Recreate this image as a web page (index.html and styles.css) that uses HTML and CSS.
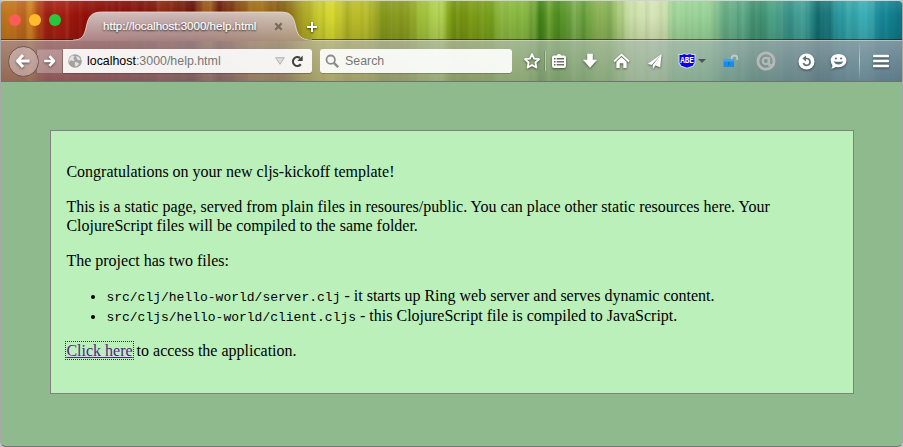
FILE: index.html
```html
<!DOCTYPE html>
<html lang="en">
<head>
<meta charset="utf-8">
<title>http://localhost:3000/help.html</title>
<link rel="stylesheet" href="styles.css">
</head>
<body>
<div class="window">
  <header class="chrome">
    <div class="tabstrip">
      <div class="lights"><i class="light close"></i><i class="light min"></i><i class="light max"></i></div>
      <div class="tab">
        <svg class="tab-shape" width="239" height="30" viewBox="0 0 239 30">
          <defs><linearGradient id="tg" x1="0" x2="1" y1="0" y2="0"><stop offset="0" stop-color="#ab7f80"/><stop offset=".45" stop-color="#a07a7a"/><stop offset=".75" stop-color="#a48676"/><stop offset="1" stop-color="#a8936f"/></linearGradient>
          <linearGradient id="th" x1="0" x2="0" y1="0" y2="1"><stop offset="0" stop-color="#fff" stop-opacity=".5"/><stop offset="1" stop-color="#fff" stop-opacity=".04"/></linearGradient></defs>
          <path d="M0 29C9 29 11 25 13 17C15 7 17 1 29 1H208C219 1 221 7 223 17C225 25 228 29 239 29V30H0Z" fill="url(#tg)"/>
          <path d="M0 29C9 29 11 25 13 17C15 7 17 1 29 1H208C219 1 221 7 223 17C225 25 228 29 239 29V30H0Z" fill="url(#th)"/>
          <path d="M0 29C9 29 11 25 13 17C15 7 17 1 29 1H208C219 1 221 7 223 17C225 25 228 29 239 29" fill="none" stroke="#f0e2da" stroke-opacity=".75"/>
        </svg>
        <span class="tab-title">http://localhost:3000/help.html</span>
        <svg class="tab-close" width="9" height="9" viewBox="0 0 9 9"><path d="M1.3 1.3L7.7 7.7M7.7 1.3L1.3 7.7" stroke="#776a5e" stroke-width="2.2"/></svg>
      </div>
      <svg class="newtab" width="12" height="12" viewBox="0 0 12 12"><path d="M6 1V11M1 6H11" stroke="#fff" stroke-width="2"/></svg>
    </div>
    <nav class="toolbar">
      <div class="back"><svg width="16" height="16" viewBox="0 0 16 16"><path d="M8 2L2.5 8L8 14M3 8H14.5" fill="none" stroke="#fff" stroke-width="3.2" stroke-linejoin="round"/></svg></div>
      <div class="forward"><svg width="13" height="14" viewBox="0 0 16 16"><path d="M8 2L13.5 8L8 14M13 8H1.5" fill="none" stroke="#fff" stroke-width="3.2" stroke-linejoin="round"/></svg></div>
      <div class="url">
        <svg width="14" height="14" viewBox="0 0 14 14"><circle cx="7" cy="7" r="6.8" fill="#a2a2a2"/><path d="M1.5 4L4 1.4L6.7 2L5.3 4.4L6.8 6.2L4.8 7L3 6.2L1 8ZM8 2L11 3L12.8 6L10.6 6.2L9 5ZM6.8 8L9.8 8.4L11 10L8 12.8L6.8 11Z" fill="#e2e2e2"/></svg>
        <span class="address"><b>localhost</b>:3000/help.html</span>
        <svg class="drop" width="10" height="8" viewBox="0 0 10 8"><path d="M.7 .7H9.3L5 7.3Z" fill="#ddd" stroke="#b3b1b1"/></svg>
        <svg class="reload" width="13" height="13" viewBox="0 0 13 13"><path d="M9.8 9.3A4.4 4.4 0 1 1 9 3" fill="none" stroke="#444" stroke-width="2.2"/><path d="M11.7 .6V6H6.3Z" fill="#444"/></svg>
      </div>
      <div class="search">
        <svg width="15" height="15" viewBox="0 0 15 15"><circle cx="5.7" cy="5.7" r="4.2" fill="none" stroke="#8b8b8b" stroke-width="1.8"/><path d="M8.8 8.8L13.2 13.2" stroke="#8b8b8b" stroke-width="2.4"/></svg>
        <span>Search</span>
      </div>
      <div class="icons">
        <svg class="star" width="18" height="18" viewBox="0 0 18 18"><path d="M9 2L11.1 6.6L16.1 7.1L12.4 10.5L13.4 15.5L9 13L4.6 15.5L5.6 10.5L1.9 7.1L6.9 6.6Z" fill="none" stroke="#fff" stroke-width="1.8" stroke-linejoin="round"/></svg>
        <i class="sep short"></i>
        <svg class="list" width="16" height="16" viewBox="0 0 16 16"><path fill-rule="evenodd" d="M3 2.5H5.5L7 1H9L10.5 2.5H13Q15 2.5 15 4.5V13Q15 15 13 15H3Q1 15 1 13V4.5Q1 2.5 3 2.5ZM3 5V6.5H4.5V5ZM5.7 5V6.5H13V5ZM3 8V9.5H4.5V8ZM5.7 8V9.5H13V8ZM3 11V12.5H4.5V11ZM5.7 11V12.5H13V11Z" fill="#fff"/></svg>
        <svg class="down" width="16" height="16" viewBox="0 0 16 16"><path d="M5.5 1H10.5V7H14.5L8 14.5L1.5 7H5.5Z" fill="#fff" stroke="#fff" stroke-width=".6" stroke-linejoin="round"/></svg>
        <svg class="home" width="17" height="16" viewBox="0 0 17 16"><path d="M1 8.5L8.5 1.7L16 8.5" fill="none" stroke="#fff" stroke-width="1.7"/><path d="M3.4 8.8L8.5 4.2L13.6 8.8V15H10.3V10.2H6.7V15H3.4Z" fill="#fff"/></svg>
        <svg class="plane" width="16" height="17" viewBox="0 0 16 17"><path d="M14.5 1L.8 10.8L4.7 12Z M14.5 1L5.8 12.1V16L8 13.3Z M14.5 1L8.6 12.4L13.2 14.3Z" fill="#fff"/></svg>
        <svg class="abe" width="18" height="16" viewBox="0 0 18 16"><path d="M1 1.5H4L5 .7H7L9 1.5L11 .7H13L14 1.5H17V10L14.8 13.3L9 15.2L3.2 13.3L1 10Z" fill="#0505e8" stroke="#d2d7df" stroke-width="1.1"/><text x="9" y="10.2" text-anchor="middle" textLength="13.6" lengthAdjust="spacingAndGlyphs">ABE</text></svg>
        <i class="caret"></i>
        <svg class="lock" width="16" height="14" viewBox="0 0 16 14"><path d="M8.6 6V4Q8.6 1.5 11.5 1.5Q14.2 1.5 14.2 4V6" fill="none" stroke="#bdcbc9" stroke-width="1.8"/><rect x=".7" y="5.5" width="10.3" height="7.5" fill="#168cf2"/><rect x=".7" y="5.5" width="10.3" height="2" fill="#38a5ff"/><path d="M5.8 8V11" stroke="#266c96" stroke-width="1.6"/></svg>
        <svg class="at" width="20" height="20" viewBox="0 0 20 20"><circle cx="10" cy="10" r="8.1" fill="none" stroke="#b9b8b9" stroke-width="2.8"/><circle cx="9.8" cy="10" r="3.1" fill="none" stroke="#b9b8b9" stroke-width="2.1"/><path d="M13.2 6V14.2H16" fill="none" stroke="#b9b8b9" stroke-width="2"/></svg>
        <svg class="undo" width="17" height="17" viewBox="0 0 17 17"><circle cx="8.5" cy="8.5" r="8" fill="#fff"/><path d="M7.5 5.5H8.7A3.4 3.4 0 1 1 5.4 10" fill="none" stroke="#5b7479" stroke-width="1.7"/><path d="M4.4 5.5L8 2.6V8.4Z" fill="#5b7479"/></svg>
        <svg class="smile" width="17" height="17" viewBox="0 0 17 17"><path d="M8.5 1C13 1 16.4 3.8 16.4 7.6S13 14.3 8.5 14.3Q7 14.3 5.7 14Q4.5 15.4 1.2 15.7Q2.6 14 2.4 12.2Q.7 10.4 .7 7.6C.7 3.8 4 1 8.5 1Z" fill="#fff"/><circle cx="5.9" cy="5.5" r="1.1" fill="#5b7479"/><circle cx="11.1" cy="5.5" r="1.1" fill="#5b7479"/><path d="M3.9 8.3Q8.5 9.4 13.1 8.3Q12.2 11.6 8.5 11.6T3.9 8.3Z" fill="#5b7479"/></svg>
        <i class="sep tall"></i>
        <svg class="menu" width="16" height="14" viewBox="0 0 16 14"><path d="M1.3 2H14.7M1.3 7H14.7M1.3 12H14.7" stroke="#fff" stroke-width="2.7" stroke-linecap="round"/></svg>
      </div>
    </nav>
  </header>
  <main class="page">
    <article class="box">
      <p>Congratulations on your new cljs-kickoff template!</p>
      <p>This is a static page, served from plain files in resoures/public. You can place other static resources here. Your ClojureScript files will be compiled to the same folder.</p>
      <p>The project has two files:</p>
      <ul>
        <li><code>src/clj/hello-world/server.clj</code> - it starts up Ring web server and serves dynamic content.</li>
        <li><code>src/cljs/hello-world/client.cljs</code> - this ClojureScript file is compiled to JavaScript.</li>
      </ul>
      <p><a href="#">Click here</a> to access the application.</p>
    </article>
  </main>
</div>
</body>
</html>
```
FILE: styles.css
```css
* { box-sizing: border-box; }
html, body { height: 100%; }
body { margin: 0; background: #c4c4c4; overflow: hidden; }
.window { height: 447px; border: 1px solid #a7a7a7; border-top-color: #d2d2d2; border-bottom-color: #777; border-radius: 5px 5px 6px 6px; overflow: hidden; display: flex; flex-direction: column; background: #8fba8e; }
.chrome {
  flex: none; height: 81px;
  background:
    linear-gradient(rgba(255,255,240,.1), rgba(255,255,240,0) 14px, rgba(0,0,0,.1) 39px),
    repeating-linear-gradient(90deg, rgba(255,255,220,.035) 0 2px, transparent 4px 7px, rgba(0,0,0,.035) 9px 10px, transparent 13px),
    repeating-linear-gradient(90deg, rgba(0,0,0,.04) 0 1px, transparent 3px 17px, rgba(255,255,200,.04) 19px, transparent 23px),
    linear-gradient(90deg, #b87018 0, #c8781c 10px, #b8601c 20px, #d08420 30px, #b44816 37px, #a02010 44px, #a81c10 62px, #900f08 85px, #840c06 130px, #7c1408 150px, #8e240c 162px, #7a1e08 175px, #641006 192px, #9a5418 203px, #a05c1c 209px, #681806 218px, #7a2c0c 228px, #8c4e10 240px, #a8751a 256px, #885810 275px, #8a6c14 288px, #a49820 298px, #b0ac24 306px, #c8ca2c 318px, #d8da30 332px, #b4b626 344px, #bcbe28 360px, #a8b028 374px, #829618 380px, #8a9c20 396px, #86981c 406px, #9cb830 416px, #a6c844 428px, #b8d858 440px, #86a81c 447px, #71900e 454px, #7c9a14 470px, #76a01c 490px, #8cb840 500px, #88b840 520px, #74a83a 533px, #3c7e14 539px, #69a030 548px, #4c8c1c 558px, #7cac50 575px, #649c38 583px, #8cb454 596px, #86ae58 610px, #aacc7c 618px, #cce0a8 630px, #d6e4b6 652px, #c9deaa 664px, #a0d498 672px, #98d498 700px, #90cc94 712px, #68ac84 722px, #5ca888 742px, #3c8c6c 755px, #4ca488 773px, #389088 788px, #44a49c 803px, #106c70 817px, #18747a 826px, #2a9aa0 838px, #3cb0b8 866px, #1c8c9c 877px, #0f8090 890px, #087080 901px);
}
.tabstrip { height: 39px; display: flex; align-items: flex-start; border-bottom: 1px solid rgba(20,20,10,.55); }
.lights { display: flex; gap: 8px; padding: 13px 0 0 8px; width: 72px; flex: none; }
.light { width: 12px; height: 12px; border-radius: 50%; }
.close { background: #fc5b57; } .min { background: #fdbc2e; } .max { background: #27c73f; }
.tab { position: relative; flex: none; width: 239px; height: 30px; margin-top: 10px; display: flex; align-items: center; font: 11.55px "Liberation Sans", sans-serif; color: #fff; text-shadow: 0 1px 2px rgba(0,0,0,.9); }
.tab-shape { position: absolute; left: 0; top: 0; }
.tab-title { position: relative; margin-left: 30px; white-space: nowrap; width: 172px; -webkit-text-stroke: .2px #fff; }
.tab-close { position: relative; margin-left: -1px; }
.newtab { margin: 20px 0 0 -6px; position: relative; filter: drop-shadow(0 1px 1px rgba(0,0,0,.7)); }
.toolbar { height: 42px; display: flex; align-items: center; padding-left: 7px; background: linear-gradient(rgba(255,255,255,.2), rgba(255,255,255,0)), linear-gradient(90deg, rgba(140,104,106,.72), rgba(135,116,122,.76) 200px, rgba(160,150,135,.66) 300px, rgba(155,162,145,.68) 420px, rgba(145,172,145,.66) 600px, rgba(132,158,152,.66) 720px, rgba(120,132,140,.76) 800px, rgba(120,128,142,.74)); border-top: 1px solid rgba(240,235,220,.6); border-bottom: 1px solid #6e7470; }
.back { width: 31px; height: 31px; border-radius: 50%; background: rgba(225,205,205,.5); border: 1px solid #6e5551; display: grid; place-items: center; z-index: 1; flex: none; }
.back svg, .forward svg, .icons svg { filter: drop-shadow(0 1px 1px rgba(0,0,0,.5)); }
.back svg { margin-left: -2px; }
.forward { width: 27px; height: 25px; margin-left: -3px; flex: none; background: rgba(215,190,195,.45); border: 1px solid rgba(85,65,65,.5); border-top-color: rgba(85,65,65,.2); display: grid; place-items: center; }
.url { width: 249px; height: 24px; flex: none; background: rgba(251,250,249,.95); border-radius: 0 3px 3px 0; display: flex; align-items: center; padding-left: 5px; font: 12.4px "Liberation Sans", sans-serif; color: #777; box-shadow: 0 1px 0 rgba(50,40,40,.35); }
.address { margin-left: 5px; width: 188px; } .address b { font-weight: 400; color: #000; }
.reload { margin-left: 6px; }
.search { width: 192px; height: 24px; margin-left: 8px; flex: none; background: rgba(251,252,249,.95); border-radius: 3px; display: flex; align-items: center; gap: 5px; padding-left: 5px; font: 12.4px "Liberation Sans", sans-serif; color: #777; box-shadow: 0 1px 0 rgba(50,60,40,.3); }
.icons { display: flex; align-items: center; flex: none; margin-left: 11px; }
.icons > * { flex: none; }
.sep { width: 1px; background: rgba(255,255,255,.4); box-shadow: -1px 0 rgba(40,60,50,.2); }
.short { height: 20px; margin: 0 5px 0 4px; }
.tall { height: 38px; margin: 0 13px 0 12px; background: linear-gradient(transparent, rgba(255,255,255,.5), transparent); box-shadow: none; }
.down { margin-left: 15px; } .home { margin-left: 15px; } .plane { margin-left: 17px; }
.icons .abe { margin-left: 15px; filter: none; }
.abe text { font: bold 9px "Liberation Mono", monospace; fill: #fff; }
.caret { border: 4px solid transparent; border-top-color: #4b5751; border-bottom: 0; margin-left: 2px; }
.icons .lock { margin-left: 17px; filter: none; } .icons .at { margin-left: 17px; filter: none; }
.undo { margin-left: 22px; } .smile { margin-left: 15px; }
.page { flex: 1; padding: 48px 48px 0 49px; }
.box { height: 264px; border: 1px solid #808080; background: #bbf0bb; padding: 15px 15px 15px 15.4px; font: 16px/19px "Liberation Serif", serif; color: #000; }
p { margin: 16px 0; }
ul { margin: 16px 0 -1px; padding-left: 40px; }
li { height: 20px; }
li::marker { font-size: 14px; }
code { font: 13px "Liberation Mono", monospace; }
a { color: #551a8b; outline: 1px dotted #333; }
```
